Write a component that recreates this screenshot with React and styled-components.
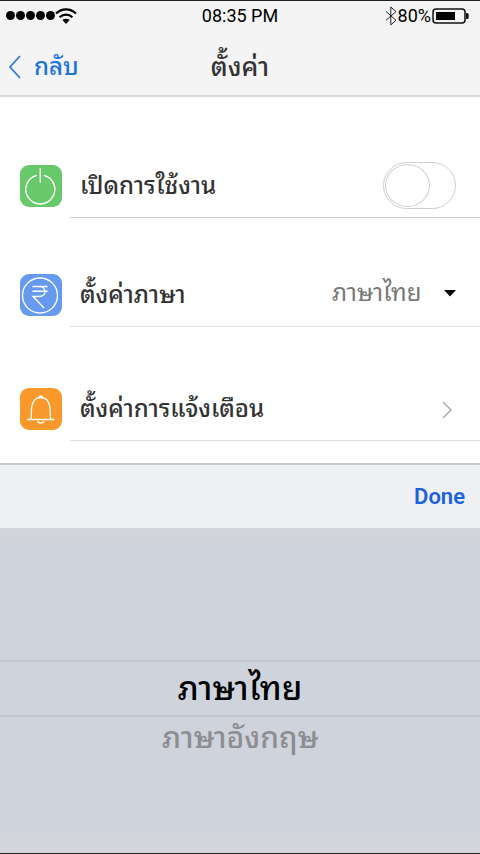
import React, { useState } from "react";
import styled, { createGlobalStyle } from "styled-components";

const GlobalStyle = createGlobalStyle`
  *, *::before, *::after { box-sizing: border-box; }
  body {
    margin: 0;
    background: #fff;
    color: #333;
    font-family: Roboto, "Noto Sans Thai Looped", "Noto Sans", sans-serif;
  }
  button, select, input { font: inherit; color: inherit; margin: 0; }
`;

const Screen = styled.main`
  display: flex;
  flex-direction: column;
  min-height: 100vh;
  border-top: 1px solid #231f20;
  border-bottom: 1px solid #231f20;
`;

const Header = styled.header`
  background: #f4f4f4;
  border-bottom: 2px solid #dadada;
`;

const StatusBar = styled.div`
  display: grid;
  grid-template-columns: 1fr auto 1fr;
  align-items: center;
  height: 29px;
  padding: 0 6px;
  color: #000;
  font-size: 18px;
`;

const StatusGroup = styled.div`
  display: flex;
  align-items: center;
  justify-content: ${(p) => (p.$end ? "flex-end" : "flex-start")};
  padding-right: ${(p) => (p.$end ? 5 : 0)}px;
`;

const Dots = styled.div`
  display: flex;
  gap: 1px;
`;

const Dot = styled.span`
  width: 9px;
  height: 9px;
  border-radius: 50%;
  background: #000;
`;

const NavBar = styled.div`
  display: grid;
  grid-template-columns: 1fr auto 1fr;
  align-items: center;
  height: 65px;
  padding: 8px 8px 0;
`;

const BackLink = styled.a`
  display: flex;
  align-items: center;
  gap: 12px;
  color: #1b76e0;
  font-size: 24px;
  font-weight: 500;
  line-height: 32px;
  text-decoration: none;
`;

const Title = styled.h1`
  margin: 0;
  font-size: 26px;
  font-weight: 500;
  line-height: 32px;
`;

const SettingsList = styled.ul`
  display: flex;
  flex-direction: column;
  margin: 0;
  padding: 0 0 22px;
  list-style: none;
`;

const Row = styled.li`
  display: grid;
  grid-template-columns: 70px 1fr;
  align-items: end;
  height: ${(p) => p.$height}px;
`;

const IconTile = styled.span`
  display: flex;
  width: 42px;
  height: 42px;
  margin: 0 0 11px 20px;
  border-radius: 9px;
  background: ${(p) => p.$color};
`;

const RowBody = styled.div`
  display: flex;
  align-items: center;
  justify-content: space-between;
  height: 64px;
  padding: 0 24px 0 10px;
  border-bottom: 1px solid ${(p) => p.$line || "#dedede"};
`;

const RowLabel = styled.label`
  font-size: 24px;
  font-weight: 500;
  line-height: 32px;
  white-space: nowrap;
`;

const RowLink = styled.a`
  display: flex;
  flex: 1;
  align-items: center;
  justify-content: space-between;
  padding-right: 4px;
  color: inherit;
  font-size: 24px;
  font-weight: 500;
  line-height: 32px;
  text-decoration: none;
`;

const Switch = styled.input`
  appearance: none;
  display: flex;
  width: 73px;
  height: 47px;
  padding: 1px;
  border: 1px solid #cfcfcf;
  border-radius: 24px;
  background: ${(p) => (p.checked ? "#68cb69" : "#fff")};
  cursor: pointer;

  &::before {
    content: "";
    width: 45px;
    height: 43px;
    margin-left: ${(p) => (p.checked ? "auto" : "0")};
    border: 1px solid #cfcfcf;
    border-radius: 50%;
    background: #fff;
  }
`;

const SelectWrap = styled.div`
  display: flex;
  align-items: center;
  padding-bottom: 3px;
`;

const Select = styled.select`
  appearance: none;
  width: 112px;
  padding: 0;
  border: 0;
  background: transparent;
  color: #777;
  font-size: 24px;
  line-height: 36px;
  cursor: pointer;
`;

const Picker = styled.section`
  display: flex;
  flex: 1;
  flex-direction: column;
  border-top: 2px solid #c8c9cb;
  background: #cfd3db;
`;

const PickerBar = styled.div`
  display: flex;
  align-items: center;
  justify-content: flex-end;
  height: 63px;
  padding: 0 15px;
  background: #eff0f2;
`;

const DoneButton = styled.button`
  padding: 0;
  border: 0;
  background: none;
  color: #1a62e0;
  font-size: 22px;
  font-weight: 600;
  cursor: pointer;
`;

const Wheel = styled.div`
  display: flex;
  flex: 1;
  flex-direction: column;
  padding-top: 132px;
  background: linear-gradient(#d2d5d9, #cfd3dc 20px, #cfd3dc calc(100% - 20px), #d2d5d9 calc(100% - 18px));
`;

const Option = styled.button`
  height: ${(p) => (p.$selected ? 57 : 42)}px;
  padding: 0;
  border: 0 solid #c4c7ce;
  border-width: ${(p) => (p.$selected ? "2px 0" : "0")};
  background: none;
  color: ${(p) => (p.$selected ? "#000" : "#8d8e92")};
  font-size: ${(p) => (p.$selected ? 33 : 30)}px;
  font-weight: 500;
  line-height: 40px;
  cursor: pointer;
`;

const WifiIcon = () => (
  <svg width="22" height="18" viewBox="0 0 22 18" fill="none" stroke="#000" strokeWidth="2.2" aria-hidden="true">
    <path d="M1 6.5C7 1 15 1 21 6.5M4.6 10.2c3.8-3.4 9-3.4 12.8 0" />
    <path d="M11 17l-3.6-4c2-1.6 5.2-1.6 7.2 0z" fill="#000" stroke="none" />
  </svg>
);

const BluetoothIcon = () => (
  <svg width="13" height="20" viewBox="0 0 13 20" fill="none" stroke="#222" strokeWidth="1" aria-hidden="true">
    <path d="M1 5.5l10 8.8-5.2 4.6V1L11 5.6 1 14.3" />
  </svg>
);

const BatteryIcon = () => (
  <svg width="38" height="16" viewBox="0 0 38 16" aria-hidden="true">
    <rect x="2" y="1" width="32" height="14" rx="3" fill="none" stroke="#111" strokeWidth="1.5" />
    <rect x="5" y="4" width="19" height="8" fill="#000" />
    <path d="M35 5h1.2q1.5 0 1.5 1.5v3q0 1.5-1.5 1.5H35z" fill="#111" />
  </svg>
);

const ChevronLeft = () => (
  <svg width="14" height="26" viewBox="0 0 14 26" fill="none" stroke="#2e7dd7" strokeWidth="1.8" aria-hidden="true">
    <path d="M12 2L2 13l10 11" />
  </svg>
);

const ChevronRight = () => (
  <svg width="10" height="18" viewBox="0 0 10 18" fill="none" stroke="#a5a5a5" strokeWidth="1.4" aria-hidden="true">
    <path d="M1 2l8 8-8 8" />
  </svg>
);

const Caret = () => (
  <svg width="12" height="7" viewBox="0 0 12 7" aria-hidden="true">
    <path d="M0 0h12L6 6.5z" fill="#000" />
  </svg>
);

const PowerIcon = () => (
  <svg width="42" height="42" viewBox="0 0 42 42" fill="none" stroke="#fff" strokeWidth="1.4" aria-hidden="true">
    <path d="M20.300 3v14.500M16.800 10.400a14.500 14.500 0 1 0 7 0" />
  </svg>
);

const RupeeIcon = () => (
  <svg width="42" height="42" viewBox="0 0 42 42" fill="none" stroke="#fff" strokeWidth="1.4" aria-hidden="true">
    <circle cx="20" cy="21.5" r="17.5" />
    <path d="M12.500 12.500h15M12.500 17.200h15M12.500 12.500h6.500c8 0 8 10 0 10H13L24 34" />
  </svg>
);

const BellIcon = () => (
  <svg width="42" height="42" viewBox="0 0 42 42" fill="none" stroke="#fff" strokeWidth="1.3" aria-hidden="true">
    <path d="M7 31.500h27.500M10.800 31.500c1-4 .2-9 1-13C12.800 13 16 9.500 20.800 9.500s8 3.500 9 9c.8 4 0 9 1 13M17.500 33.500c1.500 2 5.100 2 6.600 0" />
    <circle cx="20.800" cy="8.300" r="1" />
  </svg>
);

const LANGUAGES = ["ภาษาไทย", "ภาษาอังกฤษ"];

export default function App() {
  const [enabled, setEnabled] = useState(false);
  const [language, setLanguage] = useState(LANGUAGES[0]);

  return (
    <>
      <GlobalStyle />
      <Screen>
        <Header>
          <StatusBar>
            <StatusGroup>
              <Dots>
                {[0, 1, 2, 3, 4].map((i) => (
                  <Dot key={i} />
                ))}
              </Dots>
              <WifiIcon />
            </StatusGroup>
            <span>08:35 PM</span>
            <StatusGroup $end>
              <BluetoothIcon />
              <span>80%</span>
              <BatteryIcon />
            </StatusGroup>
          </StatusBar>
          <NavBar>
            <BackLink href="#back">
              <ChevronLeft />
              กลับ
            </BackLink>
            <Title>ตั้งค่า</Title>
          </NavBar>
        </Header>

        <SettingsList>
          <Row $height={121}>
            <IconTile $color="#68c96a">
              <PowerIcon />
            </IconTile>
            <RowBody $line="#cfcfcf">
              <RowLabel htmlFor="enabled">เปิดการใช้งาน</RowLabel>
              <Switch
                id="enabled"
                type="checkbox"
                role="switch"
                checked={enabled}
                onChange={(e) => setEnabled(e.target.checked)}
              />
            </RowBody>
          </Row>
          <Row $height={109}>
            <IconTile $color="#6699f0">
              <RupeeIcon />
            </IconTile>
            <RowBody>
              <RowLabel htmlFor="language">ตั้งค่าภาษา</RowLabel>
              <SelectWrap>
                <Select id="language" value={language} onChange={(e) => setLanguage(e.target.value)}>
                  {LANGUAGES.map((name) => (
                    <option key={name}>{name}</option>
                  ))}
                </Select>
                <Caret />
              </SelectWrap>
            </RowBody>
          </Row>
          <Row $height={114}>
            <IconTile $color="#f9982b">
              <BellIcon />
            </IconTile>
            <RowBody>
              <RowLink href="#notifications">
                ตั้งค่าการแจ้งเตือน
                <ChevronRight />
              </RowLink>
            </RowBody>
          </Row>
        </SettingsList>

        <Picker>
          <PickerBar>
            <DoneButton type="button">Done</DoneButton>
          </PickerBar>
          <Wheel>
            {LANGUAGES.map((name) => (
              <Option
                key={name}
                type="button"
                $selected={name === language}
                aria-pressed={name === language}
                onClick={() => setLanguage(name)}
              >
                {name}
              </Option>
            ))}
          </Wheel>
        </Picker>
      </Screen>
    </>
  );
}
